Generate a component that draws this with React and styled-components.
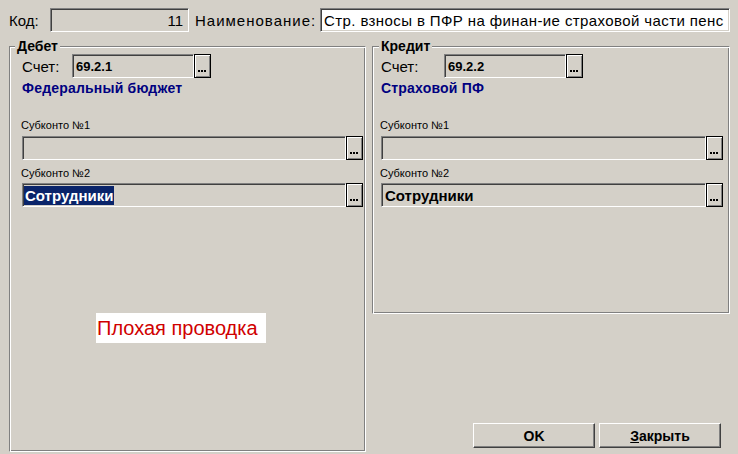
import React from 'react'
import styled, { createGlobalStyle } from 'styled-components'

const GlobalStyle = createGlobalStyle`
  html, body {
    margin: 0;
    padding: 0;
    background: #d4d0c8;
  }
  body {
    font-family: "Liberation Sans", Arial, sans-serif;
    color: #000;
  }
`

const Window = styled.div`
  width: 738px;
  height: 454px;
  box-sizing: border-box;
  padding: 8px 0 0 9px;
  background: #d4d0c8;
  overflow: hidden;
  display: flex;
  flex-direction: column;
`

const TopRow = styled.div`
  display: flex;
  align-items: center;
  height: 24px;
`

const Label = styled.span`
  font-size: 15px;
  letter-spacing: ${p => p.$ls || 0}px;
  width: ${p => (p.$w ? `${p.$w}px` : 'auto')};
  margin-left: ${p => p.$ml || 0}px;
  flex-shrink: 0;
  white-space: nowrap;
`

const Field = styled.div`
  box-sizing: border-box;
  width: ${p => p.$w}px;
  height: 24px;
  flex-shrink: 0;
  display: flex;
  align-items: center;
  justify-content: ${p => (p.$right ? 'flex-end' : 'flex-start')};
  padding: 0 ${p => (p.$right ? 5 : 0)}px 0 ${p => p.$pl ?? 2}px;
  background: ${p => (p.$white ? '#fff' : '#d4d0c8')};
  border-top: 1px solid #808080;
  border-left: 1px solid #808080;
  border-bottom: 1px solid #fff;
  border-right: 1px solid #fff;
  box-shadow: inset 1px 1px #404040, inset -1px -1px #d4d0c8;
  overflow: hidden;
  white-space: nowrap;
  font-size: ${p => p.$fs || 15}px;
  font-weight: ${p => (p.$bold ? 700 : 400)};
  letter-spacing: ${p => p.$ls || 0}px;
`

const Selected = styled.span`
  background: #0a246a;
  color: #fff;
  line-height: 19px;
  padding: 0 1px;
`

const DotsButton = styled.div`
  box-sizing: border-box;
  width: 17px;
  height: 24px;
  flex-shrink: 0;
  background: #d4d0c8;
  border: 1px solid #000;
  box-shadow: inset 1px 1px #fff, inset -1px -1px #808080;
  display: flex;
  align-items: flex-end;
  justify-content: center;
  padding-bottom: 5px;
`

const Groups = styled.div`
  display: flex;
  gap: 6px;
  margin-top: 14px;
  align-items: flex-start;
`

const Group = styled.div`
  position: relative;
  box-sizing: border-box;
  width: ${p => p.$w}px;
  height: ${p => p.$h}px;
  border-top: 1px solid #808080;
  border-left: 1px solid #808080;
  border-bottom: 1px solid #fff;
  border-right: 1px solid #fff;
  box-shadow: inset 1px 1px #fff, inset -1px -1px #808080;
  padding: 7px 0 0 ${p => p.$pl}px;
  display: flex;
  flex-direction: column;
`

const Legend = styled.span`
  position: absolute;
  top: -9px;
  left: ${p => p.$left}px;
  padding: 0 2px;
  background: #d4d0c8;
  font-size: 14px;
  font-weight: 700;
  line-height: 16px;
`

const Row = styled.div`
  display: flex;
  align-items: center;
  height: 24px;
`

const AccountName = styled.div`
  margin-top: 2px;
  color: #000080;
  font-size: 14px;
  font-weight: 700;
  line-height: 16px;
  letter-spacing: 0.2px;
`

const SubLabel = styled.div`
  margin-top: ${p => p.$mt}px;
  margin-left: -1px;
  font-size: 11px;
  line-height: 14px;
`

const SubRow = styled(Row)`
  margin-top: ${p => p.$mt}px;
`

const BadBox = styled.div`
  margin: 106px 0 0 74px;
  width: 170px;
  height: 30px;
  box-sizing: border-box;
  padding-left: 1px;
  background: #fff;
  color: #d00000;
  font-size: 20px;
  line-height: 30px;
  white-space: nowrap;
`

const RightColumn = styled.div`
  width: 358px;
  display: flex;
  flex-direction: column;
`

const ButtonBar = styled.div`
  display: flex;
  justify-content: flex-end;
  gap: 4px;
  margin-top: 109px;
  padding-right: 9px;
`

const Button = styled.div`
  box-sizing: border-box;
  width: 122px;
  height: 25px;
  background: #d4d0c8;
  border-top: 1px solid #fff;
  border-left: 1px solid #fff;
  border-bottom: 1px solid #404040;
  border-right: 1px solid #404040;
  box-shadow: inset -1px -1px #808080;
  display: flex;
  align-items: center;
  justify-content: center;
  font-size: 14px;
  font-weight: 700;
  u {
    text-decoration: underline;
  }
`

const Dots = () => (
  <svg width="9" height="2" viewBox="0 0 9 2">
    <rect x="0" y="0" width="2" height="2" fill="#000" />
    <rect x="3" y="0" width="2" height="2" fill="#000" />
    <rect x="6" y="0" width="2" height="2" fill="#000" />
  </svg>
)

const Picker = ({ w, children, ...rest }) => (
  <>
    <Field $w={w} {...rest}>{children}</Field>
    <DotsButton><Dots /></DotsButton>
  </>
)

const App = () => {
  return (
    <Window>
      <GlobalStyle />
      <TopRow>
        <Label $w={41}>Код:</Label>
        <Field $w={139} $right>11</Field>
        <Label $w={125} $ml={6} $ls={1}>Наименование:</Label>
        <Field $w={410} $white $pl={3} $ls={0.4}>
          Стр. взносы в ПФР на финан-ие страховой части пенс
        </Field>
      </TopRow>

      <Groups>
        <Group $w={357} $h={406} $pl={12}>
          <Legend $left={5}>Дебет</Legend>
          <Row>
            <Label $w={50}>Счет:</Label>
            <Picker w={122} $bold $fs={13} $pl={3}>69.2.1</Picker>
          </Row>
          <AccountName>Федеральный бюджет</AccountName>

          <SubLabel $mt={22}>Субконто №1</SubLabel>
          <SubRow $mt={4}>
            <Picker w={324} />
          </SubRow>

          <SubLabel $mt={6}>Субконто №2</SubLabel>
          <SubRow $mt={3}>
            <Picker w={324} $bold $pl={1}>
              <Selected>Сотрудники</Selected>
            </Picker>
          </SubRow>

          <BadBox>Плохая проводка</BadBox>
        </Group>

        <RightColumn>
          <Group $w={358} $h={268} $pl={8}>
            <Legend $left={6}>Кредит</Legend>
            <Row>
              <Label $w={63}>Счет:</Label>
              <Picker w={122} $bold $fs={13} $pl={3}>69.2.2</Picker>
            </Row>
            <AccountName>Страховой ПФ</AccountName>

            <SubLabel $mt={22}>Субконто №1</SubLabel>
            <SubRow $mt={4}>
              <Picker w={325} />
            </SubRow>

            <SubLabel $mt={6}>Субконто №2</SubLabel>
            <SubRow $mt={3}>
              <Picker w={325} $bold $pl={3}>Сотрудники</Picker>
            </SubRow>
          </Group>

          <ButtonBar>
            <Button>OK</Button>
            <Button><u>З</u>акрыть</Button>
          </ButtonBar>
        </RightColumn>
      </Groups>
    </Window>
  )
}

export default App
